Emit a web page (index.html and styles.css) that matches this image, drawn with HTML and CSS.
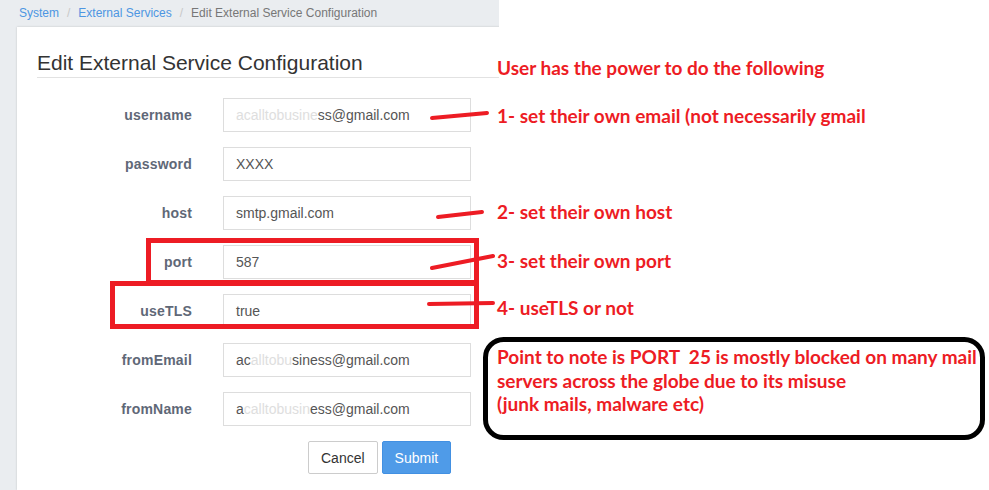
FILE: index.html
```html
<!DOCTYPE html>
<html lang="en">
<head>
<meta charset="utf-8">
<title>Edit External Service Configuration</title>
<link rel="stylesheet" href="styles.css">
</head>
<body>
<div class="canvas">
  <div class="app">
    <nav class="crumbs">
      <a class="crumb-link" href="#">System</a><span class="sep">/</span><a class="crumb-link" href="#">External Services</a><span class="sep">/</span><span class="crumb-current">Edit External Service Configuration</span>
    </nav>
    <main class="card">
      <h1 class="title">Edit External Service Configuration</h1>
      <form class="form">
        <div class="field"><label class="field-label">username</label><div class="input"><span class="smudge">acalltobusine</span>ss@gmail.com</div></div>
        <div class="field"><label class="field-label">password</label><div class="input">XXXX</div></div>
        <div class="field"><label class="field-label">host</label><div class="input">smtp.gmail.com</div></div>
        <div class="field"><label class="field-label">port</label><div class="input">587</div></div>
        <div class="field"><label class="field-label">useTLS</label><div class="input">true</div></div>
        <div class="field"><label class="field-label">fromEmail</label><div class="input">ac<span class="smudge">alltobu</span>siness@gmail.com</div></div>
        <div class="field"><label class="field-label">fromName</label><div class="input">a<span class="smudge">calltobusin</span>ess@gmail.com</div></div>
        <div class="actions">
          <button type="button" class="btn btn-default">Cancel</button>
          <button type="button" class="btn btn-primary">Submit</button>
        </div>
      </form>
    </main>
  </div>

  <svg class="marks" width="989" height="490" viewBox="0 0 989 490" aria-hidden="true">
    <g stroke="#ed1c24" stroke-linecap="round" fill="none">
      <path d="M432 118 L487 113" stroke-width="4"/>
      <path d="M438 217 L482 212" stroke-width="4"/>
      <path d="M432 268 L493 256" stroke-width="4"/>
      <path d="M429 304 L493 303" stroke-width="4"/>
      <rect x="148.5" y="240.5" width="328" height="42" stroke-width="5" stroke-linecap="butt"/>
      <rect x="112.5" y="283.5" width="364" height="43" stroke-width="5" stroke-linecap="butt"/>
    </g>
    <rect x="485.5" y="339.5" width="497" height="98" rx="18" ry="18" fill="none" stroke="#000" stroke-width="5"/>
  </svg>

  <p class="note note-head">User has the power to do the following</p>
  <p class="note note-1">1- set their own email (not necessarily gmail</p>
  <p class="note note-2">2- set their own host</p>
  <p class="note note-3">3- set their own port</p>
  <p class="note note-4">4- useTLS or not</p>
  <p class="note note-box">Point to note is PORT&nbsp; 25 is mostly blocked on many mail<br>servers across the globe due to its misuse<br>(junk mails, malware etc)</p>
</div>
</body>
</html>
```
FILE: styles.css
```css
html, body {
  margin: 0;
  padding: 0;
  background: #ffffff;
}

.canvas {
  position: relative;
  width: 989px;
  height: 490px;
  overflow: hidden;
  font-family: "Liberation Sans", Arial, sans-serif;
}

.app {
  width: 499px;
  height: 490px;
  background: #eaedf0;
  overflow: hidden;
  display: flex;
  flex-direction: column;
}

.crumbs {
  height: 27px;
  line-height: 27px;
  padding-left: 19px;
  font-size: 12px;
  white-space: nowrap;
  flex: none;
}

.crumb-link {
  color: #4d96e2;
  text-decoration: none;
}

.sep {
  color: #c8c8c8;
  margin: 0 8px;
}

.crumb-current {
  color: #777777;
}

.card {
  flex: 1;
  width: 540px;
  margin-left: 17px;
  background: #ffffff;
  box-shadow: 0 0 2px rgba(0, 0, 0, 0.18);
  padding: 25px 0 0 20px;
  box-sizing: border-box;
}

.title {
  margin: 0;
  font-size: 21px;
  line-height: 22px;
  font-weight: normal;
  color: #333333;
  padding-bottom: 3px;
  border-bottom: 1px solid #e2e2e2;
  white-space: nowrap;
}

.form {
  margin: 20px 0 0 0;
}

.field {
  display: flex;
  align-items: center;
  margin-bottom: 15px;
}

.field-label {
  width: 186px;
  padding-right: 31px;
  box-sizing: border-box;
  text-align: right;
  font-size: 14px;
  font-weight: bold;
  color: #5f6877;
  letter-spacing: 0.2px;
}

.input {
  width: 248px;
  height: 34px;
  box-sizing: border-box;
  border: 1px solid #dddddd;
  padding: 0 12px;
  display: flex;
  align-items: center;
  font-size: 14px;
  color: #555555;
  white-space: nowrap;
}

.smudge {
  color: #dedede;
}

.actions {
  display: flex;
  gap: 4px;
  padding-left: 271px;
  margin-top: 1px;
}

.btn {
  height: 33px;
  padding: 0 12px;
  font-family: "Liberation Sans", Arial, sans-serif;
  font-size: 14px;
  border-radius: 2px;
  border: 1px solid;
  cursor: pointer;
}

.btn-default {
  background: #ffffff;
  border-color: #cccccc;
  color: #333333;
}

.btn-primary {
  background: #4f9be8;
  border-color: #4290e2;
  color: #ffffff;
}

.marks {
  position: absolute;
  left: 0;
  top: 0;
  pointer-events: none;
}

.note {
  position: absolute;
  left: 497px;
  margin: 0;
  font-family: Lato, "Open Sans", sans-serif;
  font-weight: bold;
  font-size: 19px;
  line-height: 22px;
  color: #ed1c24;
  white-space: nowrap;
}

.note-head { top: 57px; }
.note-1 { top: 105px; }
.note-2 { top: 201px; }
.note-3 { top: 250px; }
.note-4 { top: 297px; }

.note-box {
  top: 345px;
  line-height: 23.5px;
}
```
